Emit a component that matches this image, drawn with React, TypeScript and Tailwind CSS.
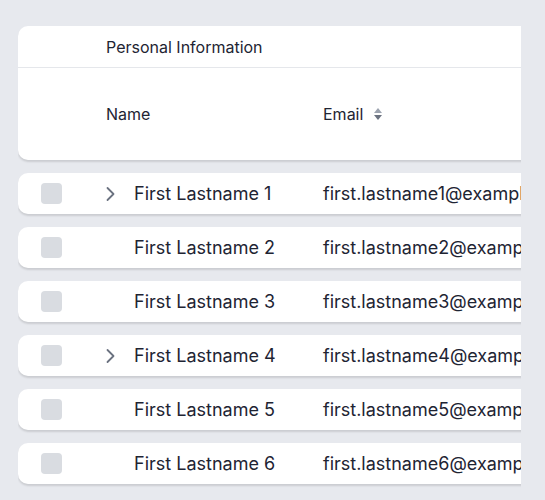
import React from "react";

const rows = [
  { n: 1, expand: true },
  { n: 2, expand: false },
  { n: 3, expand: false },
  { n: 4, expand: true },
  { n: 5, expand: false },
  { n: 6, expand: false },
];

function Chevron() {
  return (
    <svg width="12" height="16" viewBox="0 0 12 16" fill="none">
      <path d="M1.5 2 L7.5 8 L1.5 14" stroke="#6b7280" strokeWidth="1.8" strokeLinecap="round" strokeLinejoin="round" />
    </svg>
  );
}

function SortIcon() {
  return (
    <svg width="10" height="14" viewBox="0 0 10 14">
      <path d="M5 1 L9 6 H1 Z" fill="#9ca3af" />
      <path d="M5 13 L9 8 H1 Z" fill="#6b7280" />
    </svg>
  );
}

export default function App() {
  return (
    <div
      className="w-[545px] h-[500px] bg-[#e7e9ee] pt-[26px] pl-[18px]"
      style={{ fontFamily: "Inter, 'Noto Sans', sans-serif" }}
    >
      <div className="w-[503px] overflow-hidden pb-[20px]">
        <div className="w-[700px] flex flex-col gap-[13px]">
          <div className="bg-white rounded-[10px] shadow-[0_2px_2px_rgba(0,0,0,0.12)] text-[#1e2433]">
            <div className="h-[42px] flex items-center pl-[88px] text-[16px] border-b border-[#e5e7eb]">
              Personal Information
            </div>
            <div className="h-[92px] flex items-center text-[16px]">
              <div className="w-[305px] pl-[88px]">Name</div>
              <div className="flex items-center gap-[10px]">
                <span>Email</span>
                <SortIcon />
              </div>
            </div>
          </div>
          {rows.map((r) => (
            <div
              key={r.n}
              className="h-[41px] bg-white rounded-[10px] shadow-[0_2px_2px_rgba(0,0,0,0.12)] flex items-center text-[18px] text-[#1e2433]"
            >
              <div className="w-[88px] pl-[23px]">
                <div className="w-[21px] h-[21px] rounded-[4px] bg-[#d9dce1]" />
              </div>
              <div className="w-[217px] flex items-center">
                <div className="w-[28px] flex items-center">{r.expand ? <Chevron /> : null}</div>
                <span>First Lastname {r.n}</span>
              </div>
              <div>first.lastname{r.n}@example.com</div>
            </div>
          ))}
        </div>
      </div>
    </div>
  );
}
